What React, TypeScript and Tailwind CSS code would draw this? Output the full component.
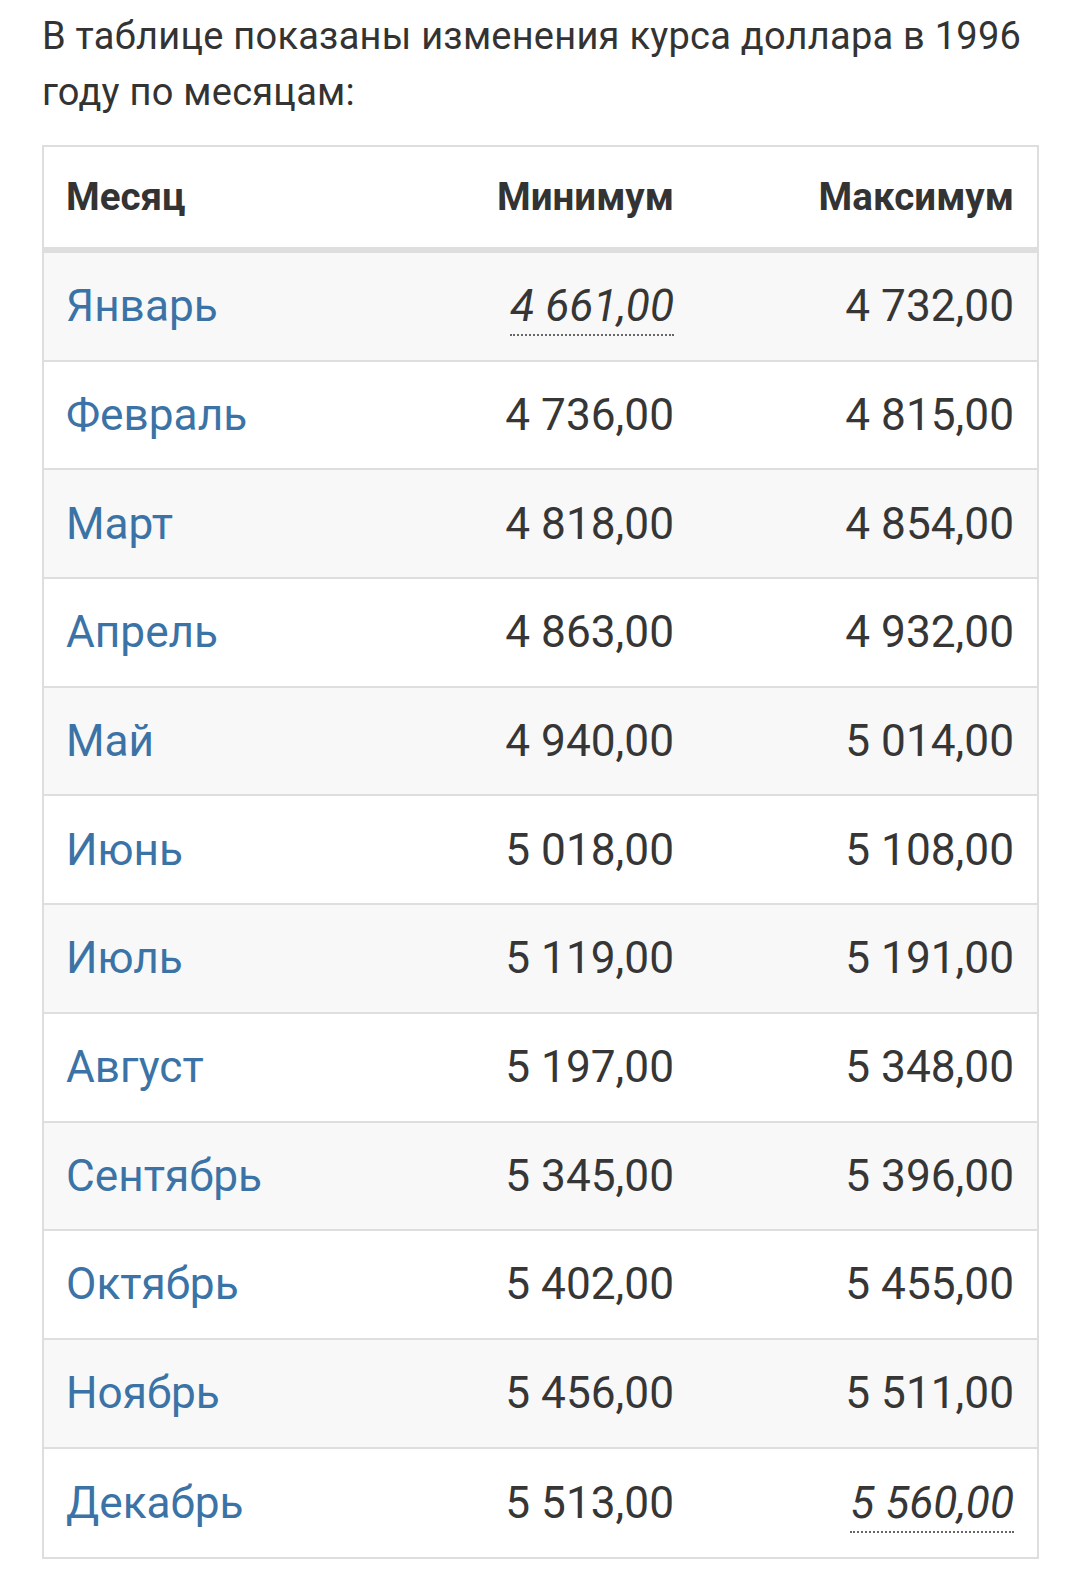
import React from "react";

type Row = {
  month: string;
  min: string;
  max: string;
  minNote?: boolean;
  maxNote?: boolean;
};

const rows: Row[] = [
  { month: "Январь", min: "4 661,00", max: "4 732,00", minNote: true },
  { month: "Февраль", min: "4 736,00", max: "4 815,00" },
  { month: "Март", min: "4 818,00", max: "4 854,00" },
  { month: "Апрель", min: "4 863,00", max: "4 932,00" },
  { month: "Май", min: "4 940,00", max: "5 014,00" },
  { month: "Июнь", min: "5 018,00", max: "5 108,00" },
  { month: "Июль", min: "5 119,00", max: "5 191,00" },
  { month: "Август", min: "5 197,00", max: "5 348,00" },
  { month: "Сентябрь", min: "5 345,00", max: "5 396,00" },
  { month: "Октябрь", min: "5 402,00", max: "5 455,00" },
  { month: "Ноябрь", min: "5 456,00", max: "5 511,00" },
  { month: "Декабрь", min: "5 513,00", max: "5 560,00", maxNote: true },
];

const Value = ({ text, note }: { text: string; note?: boolean }) =>
  note ? (
    <span className="italic border-b-2 border-dotted border-[#666] pb-[2px] leading-[48px]">
      {text}
    </span>
  ) : (
    <span>{text}</span>
  );

export default function App() {
  return (
    <div className="w-[1080px] min-h-[1595px] bg-white px-[42px] pt-[8px] font-['Roboto','Liberation_Sans',sans-serif] text-[#333]">
      <p className="text-[38px] leading-[56px] tracking-[0.25px] text-[#333]">
        В таблице показаны изменения курса доллара в 1996 году по месяцам:
      </p>

      <div className="mt-[25px] w-[997px] border-2 border-[#dedede]">
        <div className="flex h-[106px] items-center border-b-[6px] border-[#dedede] bg-white text-[38.5px] font-bold text-[#333]">
          <div className="w-[330px] pl-[22px] pr-6">Месяц</div>
          <div className="w-[324px] px-6 text-right">Минимум</div>
          <div className="w-[339px] pl-6 pr-[23px] text-right">Максимум</div>
        </div>

        {rows.map((r, i) => (
          <div
            key={r.month}
            className={
              "flex h-[108.7px] items-center text-[44.2px] text-[#363636] " +
              (i % 2 === 0 ? "bg-[#f8f8f8] " : "bg-white ") +
              (i < rows.length - 1 ? "border-b-2 border-[#dedede]" : "")
            }
          >
            <div className="w-[330px] pl-[22px] pr-6 text-[#3b73a6]">{r.month}</div>
            <div className="w-[324px] px-6 text-right">
              <Value text={r.min} note={r.minNote} />
            </div>
            <div className="w-[339px] pl-6 pr-[23px] text-right">
              <Value text={r.max} note={r.maxNote} />
            </div>
          </div>
        ))}
      </div>
    </div>
  );
}
